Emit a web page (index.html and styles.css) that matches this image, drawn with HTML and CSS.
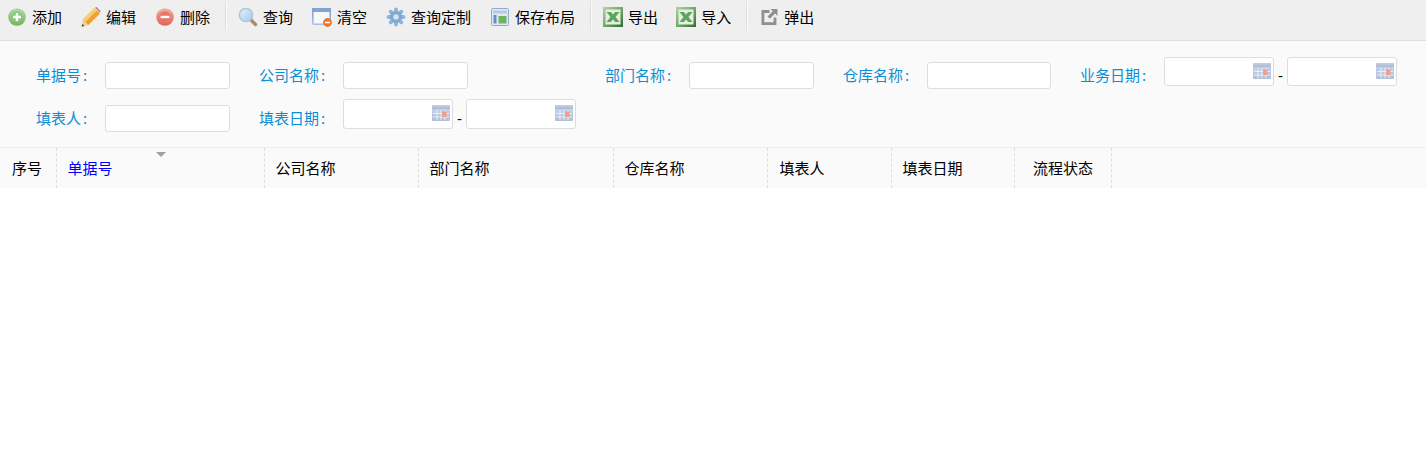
FILE: index.html
```html
<!DOCTYPE html>
<html lang="zh-CN">
<head>
<meta charset="utf-8">
<title>单据列表</title>
<link rel="stylesheet" href="styles.css">
</head>
<body>
<svg class="sprite" width="0" height="0" aria-hidden="true">
  <defs>
    <linearGradient id="gGreen" x1="0" y1="0" x2="0" y2="1"><stop offset="0" stop-color="#b4d9a6"/><stop offset="1" stop-color="#6fb35f"/></linearGradient>
    <linearGradient id="gRed" x1="0" y1="0" x2="0" y2="1"><stop offset="0" stop-color="#f3b0a4"/><stop offset="1" stop-color="#df6353"/></linearGradient>
    <linearGradient id="gLens" x1="0" y1="0" x2="1" y2="1"><stop offset="0" stop-color="#e6f1fb"/><stop offset="1" stop-color="#a5c7e8"/></linearGradient>
    <linearGradient id="gFrame" x1="0" y1="0" x2="0" y2="1"><stop offset="0" stop-color="#7f9fd0"/><stop offset="1" stop-color="#a9bfe0"/></linearGradient>
    <linearGradient id="gXl" x1="0" y1="0" x2="1" y2="1"><stop offset="0" stop-color="#b3d2a8"/><stop offset=".55" stop-color="#6ca564"/><stop offset="1" stop-color="#2f6b32"/></linearGradient>
    <linearGradient id="gCalTop" x1="0" y1="0" x2="0" y2="1"><stop offset="0" stop-color="#d2cfc8"/><stop offset="1" stop-color="#a3b9e4"/></linearGradient>
    <linearGradient id="gCalBody" x1="0" y1="0" x2="0" y2="1"><stop offset="0" stop-color="#c9d6ef"/><stop offset="1" stop-color="#b3bfd4"/></linearGradient>
    <symbol id="iXl" viewBox="0 0 20 20">
      <rect width="20" height="20" fill="url(#gXl)"/>
      <rect x="2.5" y="2.5" width="15" height="15" fill="#e6eee0"/>
      <path d="M3.5 5h4.4L10 7.6 12.1 5h4.4l-4 5 4 5h-4.4L10 12.4 7.9 15H3.5l4-5z" fill="#5aa65c"/>
    </symbol>
    <symbol id="iCal" viewBox="0 0 18 16">
      <rect width="18" height="16" rx="1" fill="url(#gCalBody)"/>
      <rect width="18" height="4" fill="url(#gCalTop)"/>
      <path d="M1 8.5h16M1 12h16M5 5v10M9 5v10M13 5v10" stroke="#eef2f9" stroke-width=".9"/>
      <rect x="10" y="6.5" width="4.5" height="5.5" fill="#eea08f"/>
    </symbol>
  </defs>
</svg>

<div class="toolbar">
  <div class="tool"><span class="ico"><svg width="18" height="18" viewBox="0 0 18 18"><circle cx="9" cy="9" r="8.8" fill="url(#gGreen)"/><circle cx="9" cy="9" r="5.6" fill="#8cc47c"/><path d="M9 5v8M5 9h8" stroke="#fff" stroke-width="2.4"/></svg></span><span>添加</span></div>
  <div class="tool"><span class="ico"><svg width="20" height="20" viewBox="0 0 20 20"><path d="M13.5 1l5.5 5.5L7.2 18.3 1.7 12.8z" fill="#f0a033"/><path d="M13.5 1l2.4 2.4L4.1 15.2l-2.4-2.4z" fill="#f9cd78"/><path d="M14 .6l1.6-.6 4 4-.6 1.8z" fill="#c8789c"/><path d="M1.7 12.8l5.5 5.5-6.7 1.5z" fill="#ead2a4"/><path d="M.5 19.8l.7-3 2.3 2.3z" fill="#555"/></svg></span><span>编辑</span></div>
  <div class="tool"><span class="ico"><svg width="18" height="18" viewBox="0 0 18 18"><circle cx="9" cy="9" r="8.8" fill="url(#gRed)"/><circle cx="9" cy="9" r="5.8" fill="#e6766a"/><path d="M4.6 9h8.8" stroke="#fff" stroke-width="2.4"/></svg></span><span>删除</span></div>
  <div class="sep"></div>
  <div class="tool"><span class="ico"><svg width="20" height="20" viewBox="0 0 20 20"><path d="M12.5 12.5l5 5" stroke="#b08a5c" stroke-width="3.4" stroke-linecap="round"/><circle cx="8" cy="8" r="6.6" fill="url(#gLens)" stroke="#a7c4de" stroke-width="1.4"/></svg></span><span>查询</span></div>
  <div class="tool"><span class="ico"><svg width="20" height="19" viewBox="0 0 20 19"><rect x=".8" y=".8" width="17.4" height="15.4" rx="1" fill="#f7f8fb" stroke="url(#gFrame)" stroke-width="1.6"/><rect x="0" y="0" width="19" height="4" fill="#85a3d2"/><circle cx="15.5" cy="14.5" r="4.4" fill="#e9762a"/><path d="M13 14.5h5" stroke="#fff" stroke-width="1.6"/></svg></span><span>清空</span></div>
  <div class="tool"><span class="ico"><svg width="20" height="20" viewBox="0 0 20 20"><path d="M10 2.5v15M2.5 10h15M4.7 4.7l10.6 10.6M15.3 4.7L4.7 15.3" stroke="#8db3d6" stroke-width="3.8" stroke-linecap="round"/><circle cx="10" cy="10" r="6" fill="#7ea9cf"/><circle cx="10" cy="10" r="2.8" fill="#d3e2ef"/></svg></span><span>查询定制</span></div>
  <div class="tool"><span class="ico"><svg width="18" height="18" viewBox="0 0 18 18"><rect x=".5" y=".5" width="17" height="17" rx="1" fill="#dfe8f3" stroke="#8fabcf"/><rect x="2" y="2.5" width="14" height="3" fill="#b5c9e3"/><rect x="2.5" y="7" width="3" height="8.5" fill="#5f8fc6"/><rect x="7.5" y="8" width="8" height="7.5" fill="#6fb35e"/></svg></span><span>保存布局</span></div>
  <div class="sep"></div>
  <div class="tool tight"><span class="ico"><svg width="20" height="20"><use href="#iXl"/></svg></span><span>导出</span></div>
  <div class="tool"><span class="ico"><svg width="20" height="20"><use href="#iXl"/></svg></span><span>导入</span></div>
  <div class="sep"></div>
  <div class="tool"><span class="ico"><svg width="17" height="16" viewBox="0 0 16 16"><path d="M8 2.5H1.4v12.1h12.1V8.5" fill="none" stroke="#8f8f8f" stroke-width="2.8"/><path d="M9 0h7v7l-2.4-2.4-5.2 5.2-2.4-2.4 5.2-5.2z" fill="#8f8f8f"/></svg></span><span>弹出</span></div>
</div>

<form class="filter">
  <label class="lbl">单据号<span class="colon">:</span></label>
  <input class="field" type="text">
  <label class="lbl">公司名称<span class="colon">:</span></label>
  <input class="field" type="text">
  <label class="lbl">部门名称<span class="colon">:</span></label>
  <input class="field" type="text">
  <label class="lbl">仓库名称<span class="colon">:</span></label>
  <input class="field narrow" type="text">
  <label class="lbl">业务日期<span class="colon">:</span></label>
  <div class="dates">
    <div class="date"><input type="text"><svg width="18" height="16"><use href="#iCal"/></svg></div>
    <span class="dash">-</span>
    <div class="date"><input type="text"><svg width="18" height="16"><use href="#iCal"/></svg></div>
  </div>

  <label class="lbl">填表人<span class="colon">:</span></label>
  <input class="field" type="text">
  <label class="lbl">填表日期<span class="colon">:</span></label>
  <div class="dates wide">
    <div class="date"><input type="text"><svg width="18" height="16"><use href="#iCal"/></svg></div>
    <span class="dash">-</span>
    <div class="date"><input type="text"><svg width="18" height="16"><use href="#iCal"/></svg></div>
  </div>
</form>

<div class="thead">
  <div class="th c-no">序号</div>
  <div class="th c-bill active">单据号<i class="sort"></i></div>
  <div class="th c-co">公司名称</div>
  <div class="th c-dept">部门名称</div>
  <div class="th c-wh">仓库名称</div>
  <div class="th c-user">填表人</div>
  <div class="th c-date">填表日期</div>
  <div class="th c-flow">流程状态</div>
</div>
</body>
</html>
```
FILE: styles.css
```css
* { box-sizing: border-box; }
html, body { margin: 0; height: 100%; background: #fff; }
body {
  font-family: "Noto Sans CJK SC", "Liberation Sans", sans-serif;
  font-size: 15px;
  color: #000;
  overflow: hidden;
}
.sprite { position: absolute; }

/* toolbar */
.toolbar {
  display: flex;
  align-items: flex-start;
  height: 41px;
  padding-left: 8px;
  background: #efefef;
  border-bottom: 1px solid #ddd;
}
.tool {
  display: flex;
  align-items: center;
  height: 34px;
  margin-right: 20px;
  line-height: 20px;
  white-space: nowrap;
}
.tool.tight { margin-right: 19px; }
.ico {
  display: flex;
  align-items: center;
  justify-content: center;
  width: 20px;
  height: 20px;
  margin: 0 5px 0 -1px;
}
.ico svg { filter: blur(.35px); }
.date svg { filter: blur(.5px); }
.sep {
  width: 2px;
  height: 28px;
  margin: 2px 12px 0 -5px;
  border-left: 1px solid #ddd;
  border-right: 1px solid #fafafa;
}

/* filter */
.filter {
  display: grid;
  grid-template-columns: 69px 154px 84px 262px 84px 154px 84px 153px 84px 1fr;
  grid-template-rows: 32px 33px;
  row-gap: 10px;
  align-items: end;
  height: 106px;
  padding: 16px 0 0 36px;
  background: #fafafa;
}
.lbl {
  height: 27px;
  line-height: 25px;
  color: #0a8fd6;
  white-space: nowrap;
}
.colon { margin-left: 2px; }
.field {
  display: block;
  width: 125px;
  height: 27px;
  padding: 0 4px;
  background: #fff;
  border: 1px solid #ddd;
  border-radius: 3px;
}
.field.narrow { width: 124px; }
.dates {
  display: flex;
  align-items: flex-end;
  align-self: start;
}
.date { position: relative; width: 110px; height: 29px; }
.wide .date { height: 30px; }
.date input {
  display: block;
  width: 100%;
  height: 100%;
  padding: 0 22px 0 4px;
  background: #fff;
  border: 1px solid #ddd;
  border-radius: 3px;
}
.date svg { position: absolute; top: 6px; right: 3px; }
.dash {
  width: 13px;
  text-align: center;
  line-height: 20px;
  font-family: "Liberation Sans", sans-serif;
}

/* table header */
.thead {
  display: flex;
  height: 41px;
  background: #fafafa;
  border-top: 1px solid #eee;
}
.th {
  position: relative;
  height: 40px;
  line-height: 40px;
  padding-left: 10.5px;
  border-right: 1px dashed #ddd;
  white-space: nowrap;
}
.c-no { width: 57px; padding-left: 12px; }
.c-bill { width: 208px; }
.c-co { width: 154px; }
.c-dept { width: 195px; }
.c-wh { width: 154px; }
.c-user { width: 124px; padding-left: 11.5px; }
.c-date { width: 123px; }
.c-flow { width: 97px; padding-left: 18px; }
.active { color: #00f; }
.sort {
  position: absolute;
  top: 4px;
  left: 99px;
  width: 0;
  height: 0;
  border-left: 5px solid transparent;
  border-right: 5px solid transparent;
  border-top: 5px solid #a0a0a0;
}
```
